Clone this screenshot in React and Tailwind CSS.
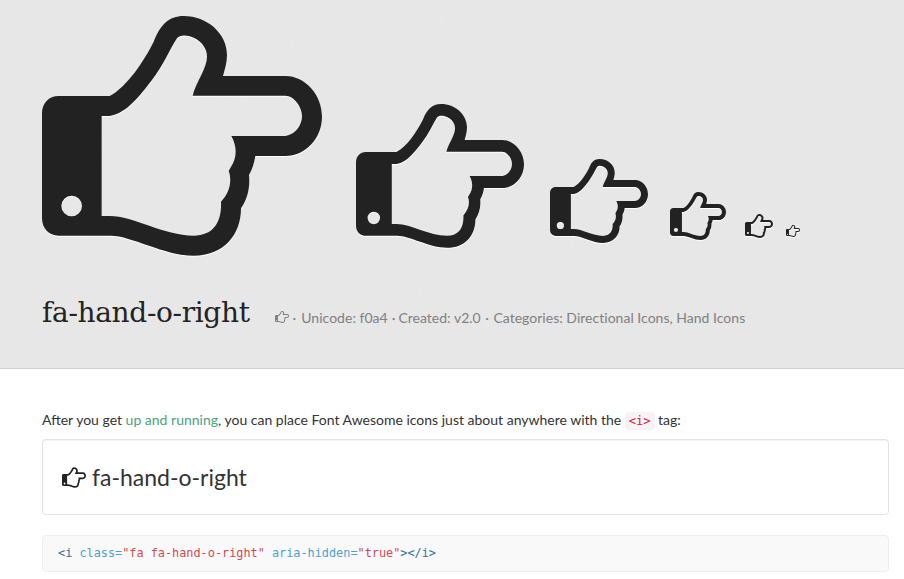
import React from 'react'

const SANS = "font-['Lato','Open_Sans',sans-serif]"

// traced from the big icon, in a 840x720 box
function HandIcon({ className }) {
  return (
    <svg viewBox="35 33 840 720" className={className} fill="currentColor" fillRule="evenodd" aria-hidden="true">
      <path d="M85 273 L238 273 C290 245 340 170 370 110 C390 60 415 33 460 33 C530 33 590 85 590 150 C590 175 583 195 578 213 L765 213 C825 213 875 270 875 335 C875 400 825 453 765 453 L675 453 C672 475 665 495 656 510 C660 550 650 585 632 610 C632 690 580 752 490 752 C400 752 300 690 238 692 L85 692 C55 692 35 670 35 640 L35 325 C35 295 55 273 85 273 Z
        M214 333 L214 633 L238 633 C310 633 400 692 490 692 C550 692 575 650 572 590 C600 560 605 525 595 498 C600 488 608 478 612 465 C620 440 615 415 603 393 L760 393 C790 393 815 365 815 333 C815 305 790 272 765 272 L487 272 C495 235 530 190 530 155 C530 130 515 110 490 98 C470 90 450 88 440 100 C420 130 400 180 365 225 C330 270 290 325 238 333 Z
        M124 572 A31 31 0 1 0 124 634 A31 31 0 1 0 124 572 Z" />
    </svg>
  )
}

// the paper grain of the header band
function Grain() {
  return (
    <svg className="absolute inset-0 h-full w-full opacity-[0.08]" aria-hidden="true">
      <filter id="grain">
        <feTurbulence type="fractalNoise" baseFrequency="0.9" numOctaves="2" stitchTiles="stitch" />
        <feColorMatrix type="saturate" values="0" />
      </filter>
      <rect width="100%" height="100%" filter="url(#grain)" />
    </svg>
  )
}

function Code({ children, color }) {
  return <span className={color}>{children}</span>
}

export default function App() {
  return (
    <div className={`h-[579px] w-[904px] overflow-hidden bg-white text-[#333] ${SANS}`}>
      {/* Header band */}
      <header className="relative h-[369px] border-b border-[#cfcfcf] bg-[#e9e9e9] pl-[42px]">
        <Grain />
        <div className="relative flex items-start text-[#222] [&_svg]:drop-shadow-[0_1px_0_#fff]">
          <HandIcon className="mt-[16px] h-[240px] w-[280px] shrink-0" />
          <HandIcon className="ml-[34px] mt-[104px] h-[144px] w-[168px] shrink-0" />
          <HandIcon className="ml-[26px] mt-[159px] h-[84px] w-[98px] shrink-0" />
          <HandIcon className="ml-[22px] mt-[192px] h-[48px] w-[56px] shrink-0" />
          <HandIcon className="ml-[19px] mt-[214px] h-[24px] w-[28px] shrink-0" />
          <HandIcon className="ml-[13px] mt-[225px] h-[12px] w-[14px] shrink-0" />
        </div>
        <div className="relative mt-[38px] flex items-baseline">
          <h1 className="font-['DejaVu_Serif',serif] text-[28px] leading-[38px] tracking-[-0.33px] text-[#222]">fa-hand-o-right</h1>
          <p className="ml-[25px] flex translate-y-[1px] items-center gap-[4px] text-[14px] tracking-[0.02px] text-[#808080]">
            <HandIcon className="h-[12px] w-[14px]" />
            <span>·</span>
            <span className="ml-[1px]">Unicode: f0a4</span>
            <span>·</span>
            <span className="ml-[-1px]">Created: v2.0</span>
            <span className="ml-[0.5px]">·</span>
            <span className="ml-[0.5px]">Categories: Directional Icons, Hand Icons</span>
          </p>
        </div>
      </header>

      <main className="pl-[42px] pr-[15px]">
        <p className="mt-[41px] h-[20px] text-[14px] leading-[20px]">
          After you get <a className="text-[#4aa37f]">up and running</a>, you can place Font Awesome icons just about anywhere with the{' '}
          <code className="rounded-[4px] bg-[#f9f2f4] px-[4px] py-[2px] font-['DejaVu_Sans_Mono',monospace] text-[12px] text-[#c7254e]">&lt;i&gt;</code> tag:
        </p>

        <div className="mt-[9px] flex h-[76px] items-center rounded-[4px] border border-[#e3e3e3] pl-[19px] shadow-[inset_0_1px_1px_rgba(0,0,0,0.05)]">
          <HandIcon className="mr-[6px] h-[21px] w-[24px] text-[#222]" />
          <span className="text-[23px] leading-none">fa-hand-o-right</span>
        </div>

        <pre className="mt-[20px] flex h-[37px] items-center rounded-[4px] border border-[#eeeeee] bg-[#f9f9f9] pl-[15px] font-['DejaVu_Sans_Mono',monospace] text-[11.85px]">
          <Code color="text-[#2f6f9f]">&lt;i</Code>
          <Code color="text-[#4f9fcf]">&nbsp;class=</Code>
          <Code color="text-[#d44950]">"fa fa-hand-o-right"</Code>
          <Code color="text-[#4f9fcf]">&nbsp;aria-hidden=</Code>
          <Code color="text-[#d44950]">"true"</Code>
          <Code color="text-[#2f6f9f]">&gt;&lt;/i&gt;</Code>
        </pre>
      </main>
    </div>
  )
}
